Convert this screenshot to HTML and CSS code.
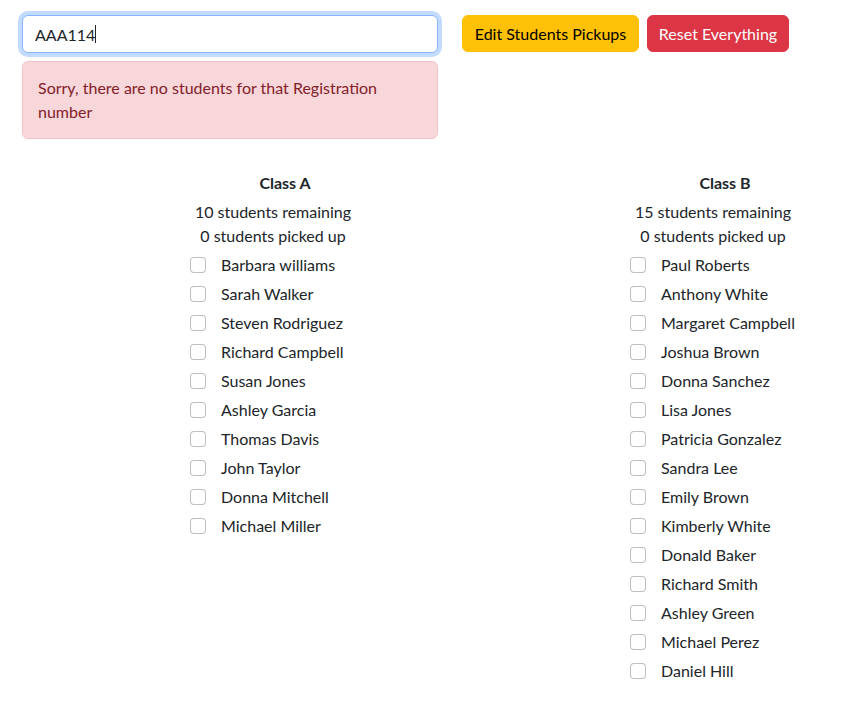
FILE: index.html
```html
<!DOCTYPE html>
<html lang="en">
<head>
<meta charset="utf-8">
<title>Student Pickups</title>
<link rel="stylesheet" href="styles.css">
</head>
<body>
<div class="top">
  <div class="search">
    <div class="input-wrap">
      <input class="form-control" type="text" value="AAA114">
      <span class="caret"></span>
    </div>
    <div class="alert">Sorry, there are no students for that Registration number</div>
  </div>
  <div class="actions">
    <button class="btn btn-warning">Edit Students Pickups</button>
    <button class="btn btn-danger">Reset Everything</button>
  </div>
</div>

<div class="classes">
  <div class="class-col">
    <div class="class-title">Class A</div>
    <div class="counts">
      <div>10 students remaining</div>
      <div>0 students picked up</div>
    </div>
    <ul class="students">
      <li><input type="checkbox"><span>Barbara williams</span></li>
      <li><input type="checkbox"><span>Sarah Walker</span></li>
      <li><input type="checkbox"><span>Steven Rodriguez</span></li>
      <li><input type="checkbox"><span>Richard Campbell</span></li>
      <li><input type="checkbox"><span>Susan Jones</span></li>
      <li><input type="checkbox"><span>Ashley Garcia</span></li>
      <li><input type="checkbox"><span>Thomas Davis</span></li>
      <li><input type="checkbox"><span>John Taylor</span></li>
      <li><input type="checkbox"><span>Donna Mitchell</span></li>
      <li><input type="checkbox"><span>Michael Miller</span></li>
    </ul>
  </div>
  <div class="class-col">
    <div class="class-title">Class B</div>
    <div class="counts">
      <div>15 students remaining</div>
      <div>0 students picked up</div>
    </div>
    <ul class="students">
      <li><input type="checkbox"><span>Paul Roberts</span></li>
      <li><input type="checkbox"><span>Anthony White</span></li>
      <li><input type="checkbox"><span>Margaret Campbell</span></li>
      <li><input type="checkbox"><span>Joshua Brown</span></li>
      <li><input type="checkbox"><span>Donna Sanchez</span></li>
      <li><input type="checkbox"><span>Lisa Jones</span></li>
      <li><input type="checkbox"><span>Patricia Gonzalez</span></li>
      <li><input type="checkbox"><span>Sandra Lee</span></li>
      <li><input type="checkbox"><span>Emily Brown</span></li>
      <li><input type="checkbox"><span>Kimberly White</span></li>
      <li><input type="checkbox"><span>Donald Baker</span></li>
      <li><input type="checkbox"><span>Richard Smith</span></li>
      <li><input type="checkbox"><span>Ashley Green</span></li>
      <li><input type="checkbox"><span>Michael Perez</span></li>
      <li><input type="checkbox"><span>Daniel Hill</span></li>
    </ul>
  </div>
</div>
</body>
</html>
```
FILE: styles.css
```css
* { box-sizing: border-box; }

body {
  margin: 0;
  padding: 15px 0 0 22px;
  font-family: Lato, "Open Sans", sans-serif;
  font-size: 16px;
  line-height: 24px;
  color: #212529;
  background: #fff;
}

.top {
  display: flex;
  gap: 24px;
  align-items: flex-start;
}

.search {
  width: 416px;
}

.input-wrap {
  position: relative;
}

.form-control {
  display: block;
  width: 100%;
  height: 38px;
  padding: 6px 12px;
  font-family: inherit;
  font-size: 16px;
  line-height: 24px;
  color: #212529;
  background: #fff;
  border: 1px solid #86b7fe;
  border-radius: 6px;
  box-shadow: 0 0 0 4px rgba(13, 110, 253, 0.25);
  outline: none;
}

.caret {
  position: absolute;
  left: 73px;
  top: 10px;
  width: 1px;
  height: 18px;
  background: #212529;
}

.alert {
  margin-top: 8px;
  padding: 14px 15px;
  color: #842029;
  background: #f8d7da;
  border: 1px solid #f5c2c7;
  border-radius: 6px;
}

.actions {
  display: flex;
  gap: 8px;
}

.btn {
  height: 37px;
  padding: 0;
  font-family: inherit;
  font-size: 16px;
  line-height: 24px;
  text-align: center;
  border: 1px solid transparent;
  border-radius: 6px;
  cursor: pointer;
}

.btn-warning {
  width: 177px;
  background: #ffc107;
  border-color: #ffc107;
  color: #000;
}

.btn-danger {
  width: 142px;
  background: #dc3545;
  border-color: #dc3545;
  color: #fff;
}

.classes {
  display: flex;
  gap: 250px;
  margin-top: 32px;
  padding-left: 168px;
}

.class-col {
  width: 190px;
}

.class-title {
  text-align: center;
  font-weight: 700;
  margin-bottom: 5px;
}

.counts {
  width: 166px;
  text-align: center;
}

.students {
  list-style: none;
  margin: 5px 0 0;
  padding: 0;
}

.students li {
  display: flex;
  align-items: center;
  gap: 15px;
  height: 24px;
  margin-bottom: 5px;
}

.students input {
  appearance: none;
  -webkit-appearance: none;
  width: 16px;
  height: 16px;
  margin: 0;
  flex: none;
  border: 1px solid rgba(0, 0, 0, 0.25);
  border-radius: 4px;
  background: #fff;
}
```
